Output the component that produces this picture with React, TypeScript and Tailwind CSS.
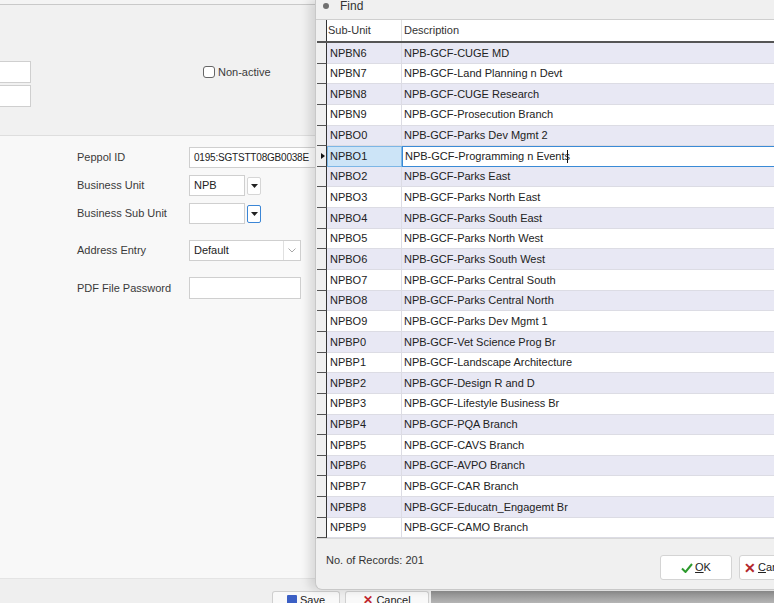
import React from "react";

const ROWS: [string, string][] = [
  ["NPBN6", "NPB-GCF-CUGE MD"],
  ["NPBN7", "NPB-GCF-Land Planning n Devt"],
  ["NPBN8", "NPB-GCF-CUGE Research"],
  ["NPBN9", "NPB-GCF-Prosecution Branch"],
  ["NPBO0", "NPB-GCF-Parks Dev Mgmt 2"],
  ["NPBO1", "NPB-GCF-Programming n Events"],
  ["NPBO2", "NPB-GCF-Parks East"],
  ["NPBO3", "NPB-GCF-Parks North East"],
  ["NPBO4", "NPB-GCF-Parks South East"],
  ["NPBO5", "NPB-GCF-Parks North West"],
  ["NPBO6", "NPB-GCF-Parks South West"],
  ["NPBO7", "NPB-GCF-Parks Central South"],
  ["NPBO8", "NPB-GCF-Parks Central North"],
  ["NPBO9", "NPB-GCF-Parks Dev Mgmt 1"],
  ["NPBP0", "NPB-GCF-Vet Science Prog Br"],
  ["NPBP1", "NPB-GCF-Landscape Architecture"],
  ["NPBP2", "NPB-GCF-Design R and D"],
  ["NPBP3", "NPB-GCF-Lifestyle Business Br"],
  ["NPBP4", "NPB-GCF-PQA Branch"],
  ["NPBP5", "NPB-GCF-CAVS Branch"],
  ["NPBP6", "NPB-GCF-AVPO Branch"],
  ["NPBP7", "NPB-GCF-CAR Branch"],
  ["NPBP8", "NPB-GCF-Educatn_Engagemt Br"],
  ["NPBP9", "NPB-GCF-CAMO Branch"],
];

const SELECTED = 5;

function DropBtn({ focused }: { focused?: boolean }) {
  return (
    <div
      className={
        "flex h-[18px] w-[14px] items-center justify-center rounded-[2px] border bg-white " +
        (focused ? "border-[#3b86d6]" : "border-[#d6d6d6]")
      }
    >
      <svg width="7" height="4" viewBox="0 0 7 4">
        <path d="M0 0h7L3.5 4z" fill="#222" />
      </svg>
    </div>
  );
}

function FormRow({ label, children, mt }: { label: string; children: React.ReactNode; mt: string }) {
  return (
    <div className={"flex items-center " + mt}>
      <div className="w-[112px] text-[11px] text-[#3a3a3a]">{label}</div>
      {children}
    </div>
  );
}

function GridRow({ code, desc, i }: { code: string; desc: string; i: number }) {
  const sel = i === SELECTED;
  const bg = i % 2 === 0 ? "bg-[#e8e8f4]" : "bg-white";
  return (
    <div className="flex h-[20.65px]">
      <div className="relative w-[10px] shrink-0 border-b border-[#555] border-r border-r-[#333] bg-[#f0f0f0]">
        {sel && (
          <svg className="absolute left-[4px] top-[7px]" width="4" height="6" viewBox="0 0 4 6">
            <path d="M0 0l4 3-4 3z" fill="#111" />
          </svg>
        )}
      </div>
      {sel ? (
        <>
          <div className="flex w-[75px] shrink-0 items-center border border-[#7cb6e6] bg-[#cce4f7] pl-[2px]">
            {code}
          </div>
          <div className="flex flex-1 items-center border border-[#3a8ad6] bg-white pl-[2px]">
            {desc}
            <span className="ml-[-3px] inline-block h-[13px] w-px bg-[#111]" />
          </div>
        </>
      ) : (
        <>
          <div className={"flex w-[75px] shrink-0 items-center border-b border-r border-[#dcdce4] pl-[3px] " + bg}>
            {code}
          </div>
          <div className={"flex flex-1 items-center border-b border-[#dcdce4] pl-[2px] " + bg}>{desc}</div>
        </>
      )}
    </div>
  );
}

export default function App() {
  return (
    <div
      className="relative h-[603px] w-[774px] overflow-hidden bg-[#f7f7f7] text-[#222]"
      style={{ fontFamily: '"Liberation Sans", Arial, sans-serif' }}
    >
      {/* background page */}
      <div className="flex h-full flex-col">
        <div className="h-[5px] border-b border-[#c9c9c9] bg-[#f4f4f4]" />
        <div className="relative h-[131px] border-b border-[#dedede] bg-[#f1f1f1]">
          <div className="flex flex-col gap-[2px] pt-[56px]">
            <div className="h-[22px] w-[31px] border border-l-0 border-[#cfcfcf] bg-white" />
            <div className="h-[22px] w-[31px] border border-l-0 border-[#cfcfcf] bg-white" />
          </div>
          <div className="absolute left-[203px] top-[59px] flex items-center gap-[3px]">
            <div className="h-[12px] w-[12px] rounded-[3px] border border-[#666] bg-white" />
            <span className="text-[11px] text-[#3a3a3a]">Non-active</span>
          </div>
        </div>
        <div className="flex-1 bg-[#f8f8f8] pl-[77px] pt-[11px]">
          <FormRow label="Peppol ID" mt="mt-0">
            <div className="flex h-[21px] w-[130px] items-center border border-[#cfcfcf] bg-white pl-[4px] text-[10px] tracking-[-0.2px]">
              0195:SGTSTT08GB0038E
            </div>
          </FormRow>
          <FormRow label="Business Unit" mt="mt-[7px]">
            <div className="flex h-[21px] w-[56px] items-center border border-[#cfcfcf] bg-white pl-[4px] text-[11px]">
              NPB
            </div>
            <div className="ml-[2px]">
              <DropBtn />
            </div>
          </FormRow>
          <FormRow label="Business Sub Unit" mt="mt-[7px]">
            <div className="h-[21px] w-[56px] border border-[#cfcfcf] bg-white" />
            <div className="ml-[2px]">
              <DropBtn focused />
            </div>
          </FormRow>
          <FormRow label="Address Entry" mt="mt-[16px]">
            <div className="flex h-[21px] w-[112px] items-center border border-[#cfcfcf] bg-white">
              <span className="flex-1 pl-[4px] text-[11px]">Default</span>
              <div className="flex h-full w-[17px] items-center justify-center border-l border-[#e0e0e0]">
                <svg width="8" height="5" viewBox="0 0 8 5">
                  <path d="M0.5 0.5L4 4l3.5-3.5" fill="none" stroke="#a8a8a8" strokeWidth="1" />
                </svg>
              </div>
            </div>
          </FormRow>
          <FormRow label="PDF File Password" mt="mt-[16px]">
            <div className="h-[22px] w-[112px] border border-[#cfcfcf] bg-white" />
          </FormRow>
        </div>
        <div className="flex h-[25px] items-end border-t border-[#e4e4e4] bg-[#efefef]">
          <div className="w-[272px]" />
          <div className="flex h-[12px] w-[68px] items-start justify-center gap-[3px] rounded-t-[3px] border border-b-0 border-[#cfcfcf] bg-[#f9f9f9] pt-[3px] text-[11px]">
            <div className="h-[9px] w-[10px] rounded-[1px] bg-[#3b5fc4]" />
            <span className="leading-[10px]">Save</span>
          </div>
          <div className="ml-[5px] flex h-[12px] w-[84px] items-start justify-center gap-[3px] rounded-t-[3px] border border-b-0 border-[#cfcfcf] bg-[#f9f9f9] pt-[3px] text-[11px]">
            <span className="text-[12px] leading-[10px] font-bold text-[#c0272d]">✕</span>
            <span className="leading-[10px]">Cancel</span>
          </div>
          <div className="ml-[2px] h-[12px] flex-1 bg-gradient-to-b from-[#8e8e8e] to-[#b4b4b4]" />
        </div>
      </div>

      {/* Find dialog */}
      <div className="absolute left-[315px] top-0 flex h-[590px] w-[480px] flex-col rounded-bl-[7px] border-l border-b border-[#c8c8c8] bg-[#f0f0f0] shadow-[-6px_0_10px_rgba(0,0,0,0.12)]">
        <div className="flex h-[20px] items-start border-b border-[#cfcfcf]">
          <div className="ml-[7px] mt-[3px] h-[6px] w-[6px] rounded-full bg-[#707070]" />
          <span className="ml-[11px] text-[12px] leading-[13px] text-[#333]">Find</span>
        </div>
        <div className="ml-[1px] text-[11px]">
          <div className="flex h-[23px] border-b-2 border-[#555] bg-white">
            <div className="w-[10px] shrink-0 border-r border-[#333] bg-[#f0f0f0]" />
            <div className="flex w-[75px] shrink-0 items-center border-r border-[#e0e0e0] pl-[1px] text-[#333]">
              Sub-Unit
            </div>
            <div className="flex flex-1 items-center pl-[2px] text-[#333]">Description</div>
          </div>
          {ROWS.map(([c, d], i) => (
            <GridRow key={c} code={c} desc={d} i={i} />
          ))}
        </div>
        <div className="flex flex-1 items-start border-t border-[#d8d8d8] pl-[10px] pt-[13px]">
          <span className="text-[11px] text-[#333]">No. of Records: 201</span>
        </div>
        <div className="absolute left-[344px] top-[555px] flex gap-[7px]">
          <div className="flex h-[25px] w-[72px] items-center justify-center gap-[2px] rounded-[3px] border border-[#d4d4d4] bg-white text-[11px]">
            <svg width="12" height="10" viewBox="0 0 12 10">
              <path d="M1 5.5l3.5 3.5L11 1" fill="none" stroke="#2d9a2d" strokeWidth="2" />
            </svg>
            <span>
              <span className="underline">O</span>K
            </span>
          </div>
          <div className="flex h-[25px] w-[72px] items-center justify-start gap-[2px] rounded-[3px] border border-[#d4d4d4] bg-white pl-[4px] text-[11px]">
            <span className="text-[14px] font-bold leading-none text-[#b3262c]">✕</span>
            <span>
              <span className="underline">C</span>ancel
            </span>
          </div>
        </div>
      </div>
    </div>
  );
}
